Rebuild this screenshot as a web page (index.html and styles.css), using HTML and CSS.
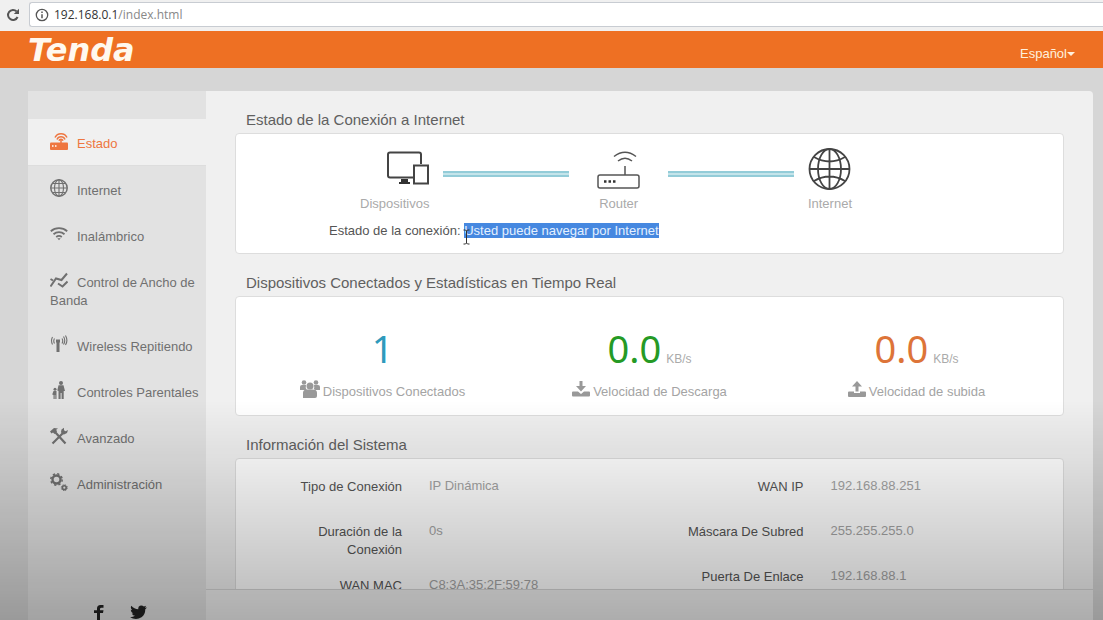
FILE: index.html
```html
<!DOCTYPE html>
<html lang="es">
<head>
<meta charset="utf-8">
<title>Tenda</title>
<link rel="stylesheet" href="styles.css">
</head>
<body>
<div class="browser-bar">
  <button class="reload" aria-label="Recargar">
    <svg width="14" height="14" viewBox="0 0 14 14"><path d="M11.6 9A5 5 0 1 1 10.6 3.4" fill="none" stroke="#555" stroke-width="2"/><path d="M13 .8V6H7.800z" fill="#555"/></svg>
  </button>
  <div class="address" role="textbox" aria-label="Dirección">
    <svg width="14" height="14" viewBox="0 0 14 14"><circle cx="7" cy="7" r="5.700" fill="none" stroke="#555" stroke-width="1.300"/><path d="M7 6.200V10.300M7 3.500V5" stroke="#555" stroke-width="1.500"/></svg>
    <span><span class="host">192.168.0.1</span>/index.html</span>
  </div>
</div>
<header class="topbar">
  <a class="logo" href="#">Tenda</a>
  <label class="language"><select aria-label="Idioma"><option>Español</option></select></label>
</header>
<div class="page">
  <aside class="sidebar">
    <nav class="menu">
      <a class="item active" href="#"><svg class="icon" viewBox="0 0 18 18"><path d="M1 10.500H17Q18 10.500 18 11.500V17Q18 18 17 18H1Q0 18 0 17V11.500Q0 10.500 1 10.500z" fill="currentColor"/><path d="M11 11V7M5 5.500A6.600 6.600 0 0 1 17 5.500M7 7.500A4.300 4.300 0 0 1 15 7.500M9 8.800A2.100 2.100 0 0 1 13 8.800" fill="none" stroke="currentColor" stroke-width="1.500"/><path d="M2 14H3.500M5 14H6.500" stroke="#fff" stroke-width="1.300"/></svg>Estado</a>
      <a class="item" href="#"><svg class="icon" viewBox="0 0 18 18"><g fill="none" stroke="currentColor" stroke-width="1.100"><circle cx="9" cy="9" r="8.200" stroke-width="1.500"/><ellipse cx="9" cy="9" rx="4.500" ry="8.200"/><path d="M9 1V17M1 9H17M2.500 4.500H15.500M2.500 13.500H15.500"/></g></svg>Internet</a>
      <a class="item" href="#"><svg class="icon" viewBox="0 0 18 18"><g fill="none" stroke="currentColor" stroke-width="1.800"><path d="M.8 6.200A12.500 12.500 0 0 1 17.200 6.200M3.500 9.200A8.500 8.500 0 0 1 14.500 9.200M6.200 12A4.500 4.500 0 0 1 11.800 12"/></g><path d="M7.300 13.300H10.700L9 15.200z" fill="currentColor"/></svg>Inalámbrico</a>
      <a class="item" href="#"><svg class="icon" viewBox="0 0 18 18"><path d="M.5 15.500L6 7.500L11.500 9L17 2.500M.5 8L3 9.500M8 12.500L12.500 15.500L17.500 10.500" fill="none" stroke="currentColor" stroke-width="2"/></svg>Control de Ancho de Banda</a>
      <a class="item" href="#"><svg class="icon" viewBox="0 0 18 18"><path d="M8 5.500V17" stroke="currentColor" stroke-width="3"/><path d="M6 6H10" stroke="currentColor" stroke-width="3"/><path d="M4.500 3.500Q3 6 4.500 8.500M2.500 2Q.5 5.500 2.500 9.500M12 3.500Q13.500 6 12 8.500M13.500 1.500Q16 5.500 13.500 9.500M15.500 .5Q18.300 5.500 15.500 10" fill="none" stroke="currentColor" stroke-width="1.100"/></svg>Wireless Repitiendo</a>
      <a class="item" href="#"><svg class="icon" viewBox="0 0 18 18"><g fill="currentColor"><circle cx="11" cy="2" r="2"/><path d="M8.500 4.300H13.500L15 10H13.700V18H11.600V12H10.600V18H8.500V10L7.300 9.500z"/><circle cx="5" cy="8.300" r="1.500"/><path d="M3.500 10H6.500V18H5.300V14H4.700V18H3.500V14L2.200 13.500z"/></g></svg>Controles Parentales</a>
      <a class="item" href="#"><svg class="icon" viewBox="0 0 18 18"><path d="M5 5L15.500 16.500M2.500 16.500L13 6" fill="none" stroke="currentColor" stroke-width="2.200"/><path d="M0 4.500L4 1L8 1.500L6.200 2.800L7 4.500L4.500 7L3 5.500L1.500 6.500zM11 5L11.500 2.500L14 .8V3.300L15.500 4.300L18 3L17 6L14 7.500L12 7z" fill="currentColor"/></svg>Avanzado</a>
      <a class="item" href="#"><svg class="icon" viewBox="0 0 18 18"><g fill="none" stroke="currentColor"><circle cx="6.500" cy="6.500" r="4" stroke-width="2.400"/><circle cx="6.500" cy="6.500" r="5.700" stroke-width="1.500" stroke-dasharray="2.240 2.240"/><circle cx="14.300" cy="14.700" r="1.900" stroke-width="1.600"/><circle cx="14.300" cy="14.700" r="3" stroke-width="1" stroke-dasharray="1.180 1.180"/></g></svg>Administración</a>
    </nav>
    <div class="social">
      <a href="#" aria-label="Facebook"><svg width="12" height="16" viewBox="0 0 12 16"><path d="M4 16V9H1V6.300H4V4.500Q4 1 7.500 1H10.500V3.700H8.500Q7 3.700 7 5V6.300H10.500L10 9H7V16z" fill="#222"/></svg></a>
      <a href="#" aria-label="Twitter"><svg width="17" height="16" viewBox="0 0 17 16"><path d="M17 3.500L15.300 5.300Q15.300 10.500 11.500 13.300Q6 16.500 0 13.200Q3 13.300 5 11.800Q2.700 11.500 1.800 9.400H3.300Q.8 8.300.7 5.800L2.200 6.200Q0 4.300 1.300 1.800Q4.200 5.200 8.300 5.300Q7.900 2.800 9.900 1.800Q12 1 13.900 2.600L16.200 1.800L14.900 3.700z" fill="#222"/></svg></a>
    </div>
  </aside>
  <main class="main">
    <div class="content">
      <section>
        <h2>Estado de la Conexión a Internet</h2>
        <div class="card connection">
          <div class="path">
            <div class="node node-devices"><svg width="42" height="42" viewBox="0 0 42 42"><path d="M26 29.500H3Q1 29.500 1 27.500V6.500Q1 4.500 3 4.500H32Q34 4.500 34 6.500V16" fill="none" stroke="#444" stroke-width="2"/><path d="M14 31H21V34H23V36H12V34H14z" fill="#333"/><rect x="27" y="17.500" width="14" height="18" fill="#fff" stroke="#444" stroke-width="2"/></svg><span>Dispositivos</span></div>
            <div class="link"></div>
            <div class="node node-router"><svg width="43" height="42" viewBox="0 0 43 42"><g fill="none" stroke="#555" stroke-width="1.500"><rect x="1" y="27" width="41" height="13" rx="2"/><path d="M28 27V18M17 8.500Q28 0 39 8.500M21 13Q28 7.500 35 13"/></g><path d="M7 33.500H9.500M11.500 33.500H14M16 33.500H18.500" stroke="#333" stroke-width="2.500"/></svg><span>Router</span></div>
            <div class="link"></div>
            <div class="node"><svg width="43" height="42" viewBox="0 0 43 42"><g fill="none" stroke="#444" stroke-width="1.800"><circle cx="21.500" cy="21" r="20"/><ellipse cx="21.500" cy="21" rx="11.500" ry="20"/><path d="M21.500 1V41M1.500 21H41.500M6 9Q21.500 18 37 9M6 33Q21.500 24 37 33"/></g></svg><span>Internet</span></div>
          </div>
          <p class="status">Estado de la conexión: <mark>Usted puede navegar por Internet<svg class="caret" width="7" height="16" viewBox="0 0 7 16"><path d="M.5 1H2.500L3.500 2L4.500 1H6.500M3.500 2V14M.5 15H2.500L3.500 14L4.500 15H6.500" fill="none" stroke="#333"/></svg></mark></p>
        </div>
      </section>
      <section>
        <h2>Dispositivos Conectados y Estadísticas en Tiempo Real</h2>
        <div class="card stats">
          <div class="stat"><div class="figure blue">1</div><div class="caption"><svg width="20" height="18" viewBox="0 0 20 18"><g fill="currentColor"><circle cx="4" cy="2.500" r="2.300"/><circle cx="16" cy="2.500" r="2.300"/><circle cx="10" cy="6" r="3.500"/><path d="M0 10V7Q0 5 2 5H6Q5 8 7 10zM20 10V7Q20 5 18 5H14Q15 8 13 10zM3 18V13Q3 9.500 6.500 9.500H13.500Q17 9.500 17 13V16Q17 18 15 18z"/></g></svg>Dispositivos Conectados</div></div>
          <div class="stat"><div class="figure green">0.0<small>KB/s</small></div><div class="caption"><svg width="18" height="18" viewBox="0 0 18 18"><path d="M7.500 1H10.500V6H14L9 11.500L4 6H7.500zM1 11.500H6L9 14L12 11.500H17Q18 11.500 18 12.500V15.500Q18 16.500 17 16.500H1Q0 16.500 0 15.500V12.500Q0 11.500 1 11.500z" fill="currentColor"/></svg>Velocidad de Descarga</div></div>
          <div class="stat"><div class="figure orange">0.0<small>KB/s</small></div><div class="caption"><svg width="18" height="18" viewBox="0 0 18 18"><path d="M7.500 11.500H10.500V6.500H14L9 1L4 6.500H7.500zM1 11.500H6V13H12V11.500H17Q18 11.500 18 12.500V16Q18 17 17 17H1Q0 17 0 16V12.500Q0 11.500 1 11.500z" fill="currentColor"/></svg>Velocidad de subida</div></div>
        </div>
      </section>
      <section>
        <h2>Información del Sistema</h2>
        <div class="card system">
          <dl>
            <div class="row"><dt>Tipo de Conexión</dt><dd>IP Dinámica</dd></div>
            <div class="row"><dt>Duración de la Conexión</dt><dd>0s</dd></div>
            <div class="row"><dt>WAN MAC</dt><dd>C8:3A:35:2F:59:78</dd></div>
          </dl>
          <dl>
            <div class="row"><dt>WAN IP</dt><dd>192.168.88.251</dd></div>
            <div class="row"><dt>Máscara De Subred</dt><dd>255.255.255.0</dd></div>
            <div class="row"><dt>Puerta De Enlace</dt><dd>192.168.88.1</dd></div>
          </dl>
        </div>
      </section>
    </div>
    <div class="footer"></div>
  </main>
</div>
</body>
</html>
```
FILE: styles.css
```css
* { box-sizing: border-box; }
body {
  margin: 0;
  height: 100vh;
  display: flex;
  flex-direction: column;
  overflow: hidden;
  background: #d6d6d6;
  color: #666;
  font: 13px/18px "Liberation Sans", Arial, sans-serif;
}
/* shade that darkens the lower part of the window */
body::after {
  content: "";
  position: fixed;
  inset: auto 0 0 0;
  height: 220px;
  pointer-events: none;
  background: linear-gradient(rgba(0,0,0,0), rgba(0,0,0,.07) 27%, rgba(0,0,0,.28));
}
a { color: inherit; text-decoration: none; }
svg { flex: none; }

.browser-bar {
  display: flex;
  align-items: center;
  flex: none;
  height: 31px;
  padding: 2px 0 4px 6px;
  gap: 9px;
  background: #f0f0f0;
}
.reload { display: flex; padding: 0; border: 0; background: none; }
.address {
  flex: 1;
  display: flex;
  align-items: center;
  gap: 5px;
  height: 25px;
  padding-left: 5px;
  border: 1px solid #c8ccd2;
  border-right: 0;
  border-radius: 3px 0 0 3px;
  background: #fff;
  color: #888;
  font: 12px/18px "Open Sans", sans-serif;
}
.host { color: #333; }

.topbar {
  display: flex;
  align-items: center;
  justify-content: space-between;
  flex: none;
  height: 37px;
  padding: 0 28px;
  background: #ee7023;
  color: #fff0dd;
}
.logo { font: italic bold 32px/36px "DejaVu Sans", sans-serif; color: #fff8ee; }
.language { display: flex; align-items: center; padding-top: 8px; }
.language select {
  appearance: none;
  padding: 0;
  border: 0;
  background: none;
  color: inherit;
  font: inherit;
}
.language::after {
  content: "";
  border: 4px solid transparent;
  border-top-color: currentColor;
  border-bottom: 0;
}

.page {
  flex: 1;
  min-height: 0;
  display: flex;
  padding: 23px 10px 0 28px;
}
.sidebar {
  flex: 0 0 178px;
  display: flex;
  flex-direction: column;
  justify-content: space-between;
  padding-top: 28px;
  background: #e2e2e2;
}
.menu { display: flex; flex-direction: column; }
.item { padding: 16px 5px 12px 22px; color: #707070; }
.item.active { background: #f0f0f0; color: #ee7640; border-bottom: 1px solid #ddd; }
.icon {
  width: 18px;
  height: 18px;
  margin: -6px 9px -4px 0;
  vertical-align: 2px;
}
.social { display: flex; gap: 25px; padding-left: 65px; }
.social svg { display: block; }

.main {
  flex: 1;
  min-width: 0;
  display: flex;
  flex-direction: column;
  border-radius: 0 4px 0 0;
  background: #f0f0f0;
}
.content { flex: 1; min-height: 0; overflow: hidden; padding: 0 29px; }
.footer { flex: none; height: 31px; border-top: 1px solid #d5d5d5; }
h2 {
  margin: 0;
  padding: 19px 0 3px 11px;
  font-size: 15px;
  line-height: 20px;
  font-weight: normal;
  color: #606060;
}
.card { border: 1px solid #ddd; border-radius: 4px; background: #fff; }

.connection { height: 121px; padding-top: 14px; }
.path { display: flex; padding: 0 211px 0 15%; }
.node { display: flex; flex-direction: column; align-items: center; gap: 5px; color: #aaa; }
.node-devices { align-items: flex-end; }
.node-router { margin: 0 14px; }
.link {
  flex: 1;
  height: 6px;
  margin: 23px 14px 0;
  border: solid #93ccd8;
  border-width: 2px 0;
  background: #c4e4ea;
}
.status { margin: 9px 0 0; padding-left: 93px; color: #555; }
mark { position: relative; background: #4688e0; color: #e4f0ff; }
.caret { position: absolute; left: -1px; top: 6px; }

.stats { display: grid; grid-template-columns: repeat(3, 1fr); height: 120px; padding: 30px 13px 0; }
.figure {
  display: flex;
  justify-content: center;
  align-items: baseline;
  gap: 5px;
  font: 38px/42px "Noto Sans", sans-serif;
}
.figure small { font: 12px/14px "Liberation Sans", Arial, sans-serif; color: #aaa; }
.blue { color: #2f9abc; }
.green { color: #259a25; }
.orange { color: #dd7438; }
.caption { display: flex; justify-content: center; gap: 3px; margin-top: 14px; color: #a4a4a4; }
.caption svg { color: #999; margin-top: -3px; }

.system { display: grid; grid-template-columns: 1fr 1fr; padding: 12px 12px; }
dl { margin: 0; }
.row { display: flex; gap: 27px; min-height: 34px; margin-bottom: 11px; }
dt { flex: 0 0 154px; padding: 7px 0 0 36px; text-align: right; color: #555; }
dd { margin: 0; padding-top: 6px; color: #a4a4a4; }
```
